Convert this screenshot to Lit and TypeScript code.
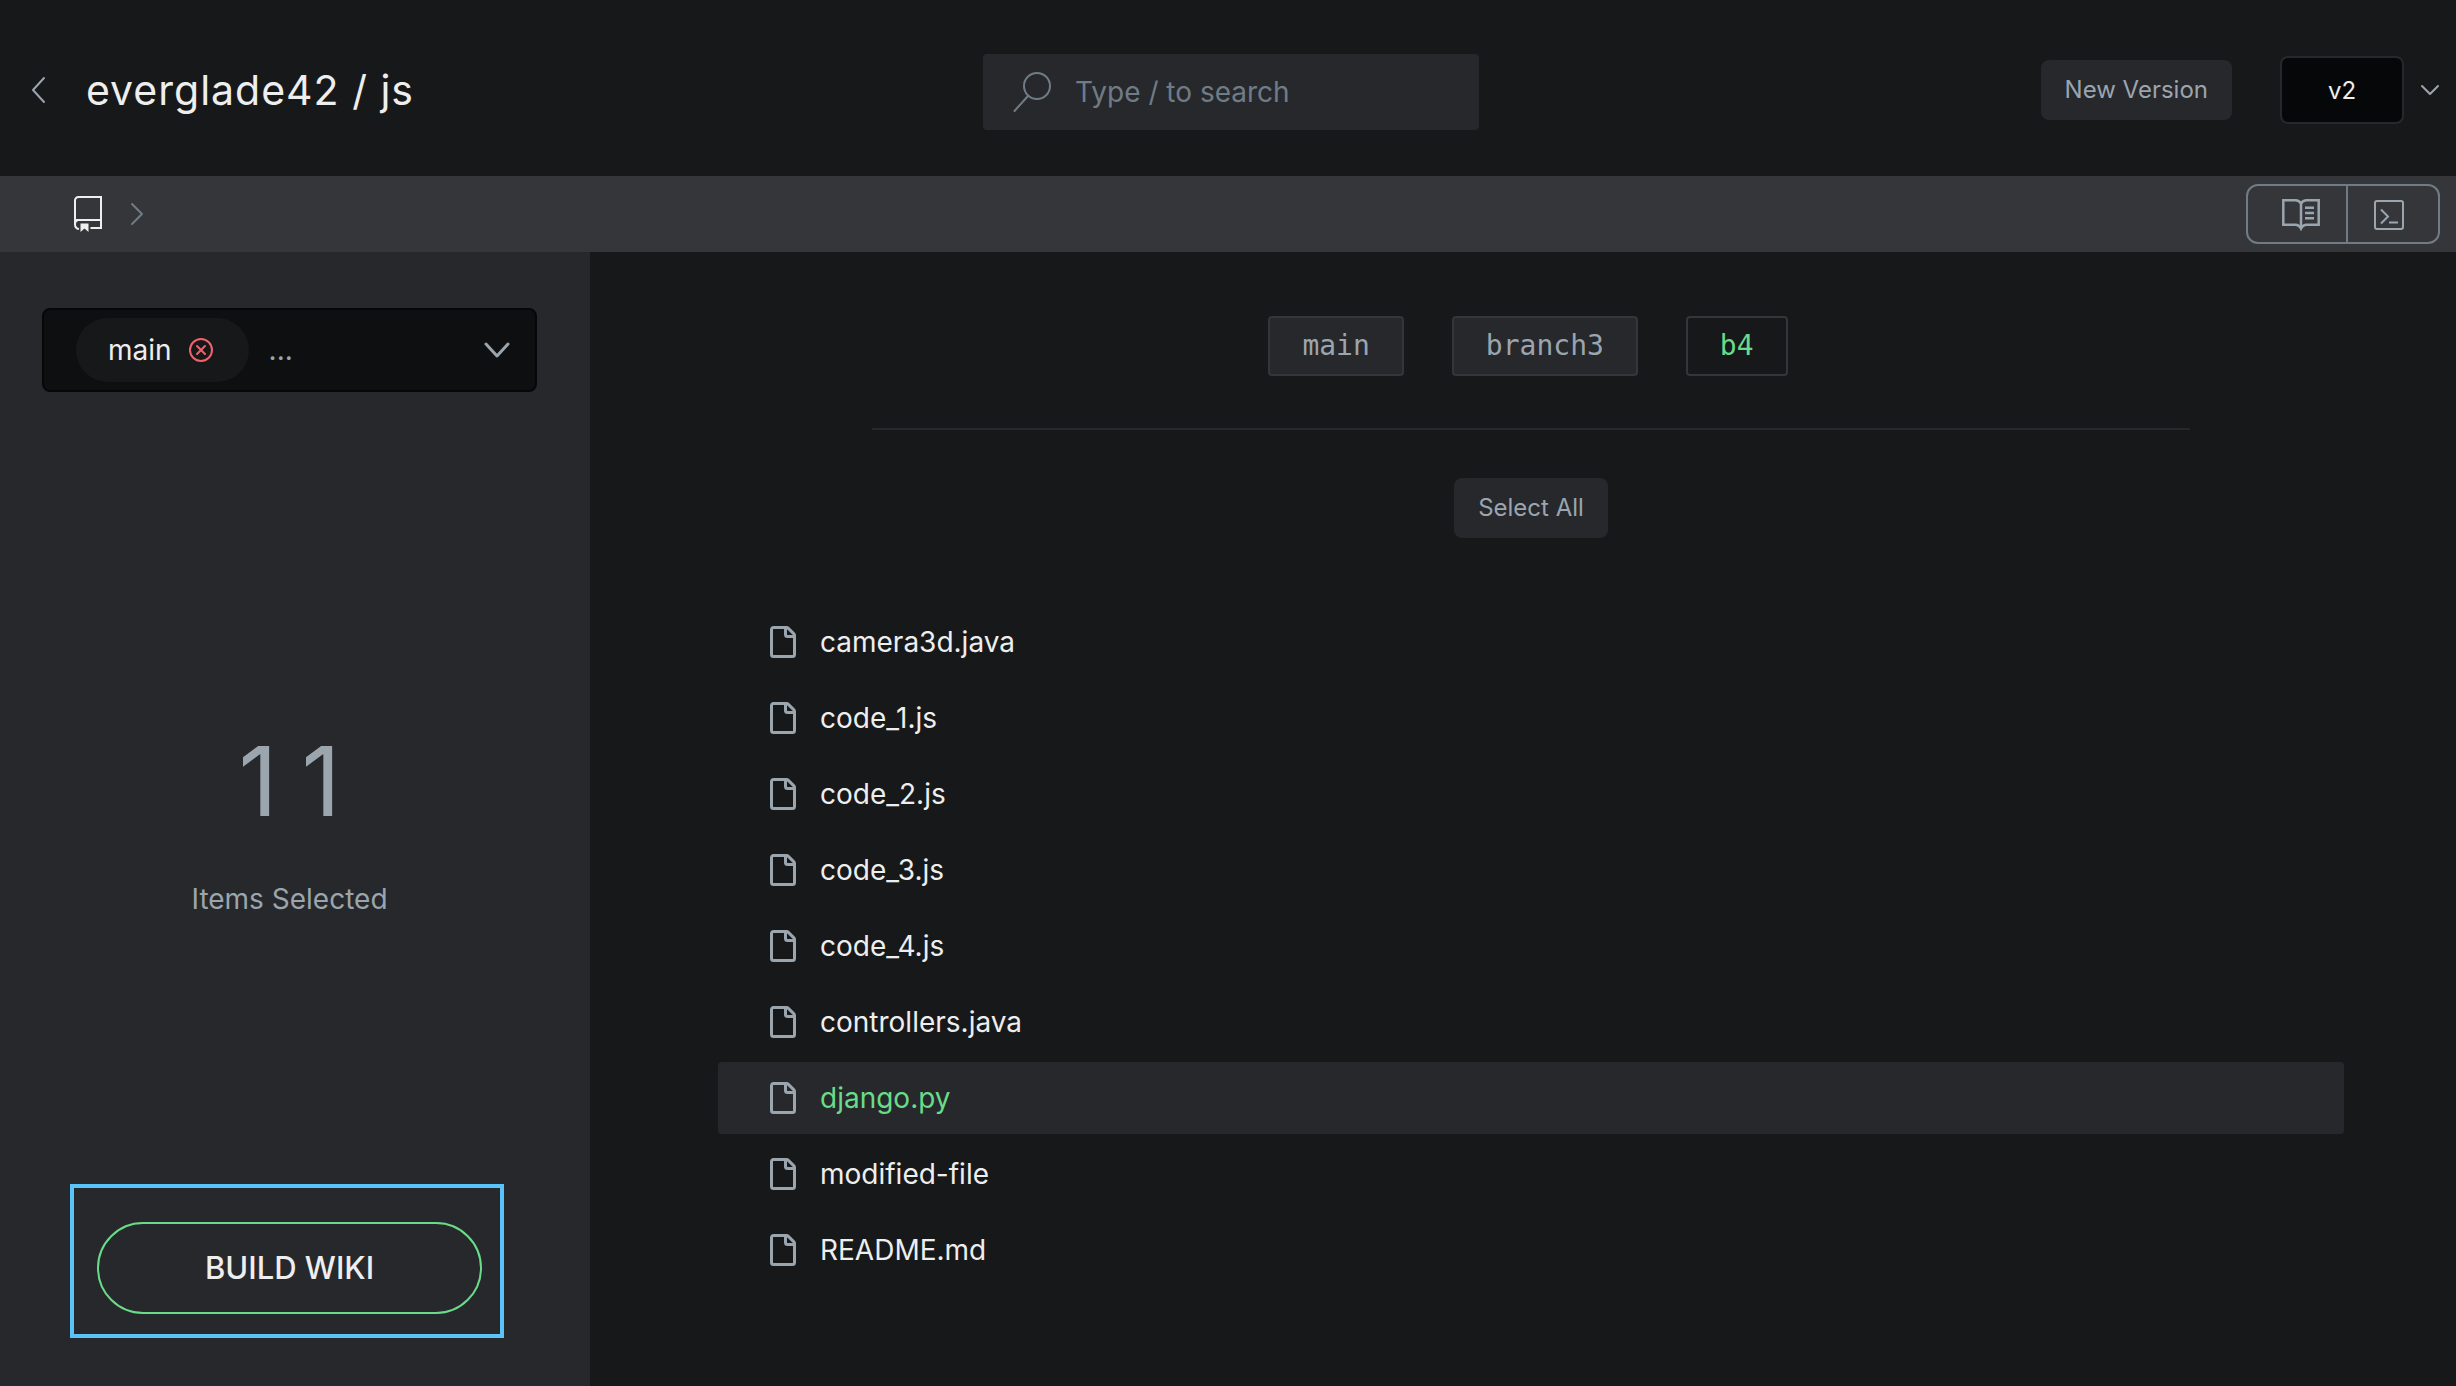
import { LitElement, html, css, svg } from "lit";
import { customElement, state } from "lit/decorators.js";
import { classMap } from "lit/directives/class-map.js";

const FILES = [
  "camera3d.java",
  "code_1.js",
  "code_2.js",
  "code_3.js",
  "code_4.js",
  "controllers.java",
  "django.py",
  "modified-file",
  "README.md",
];

const BRANCHES = ["main", "branch3", "b4"];

const chevron = (w: number, h: number, points: string, width: number) => html`
  <svg width=${w} height=${h} viewBox="0 0 ${w} ${h}" fill="none" stroke="currentColor"
    stroke-width=${width} stroke-linecap="round" stroke-linejoin="round" aria-hidden="true">
    ${svg`<polyline points=${points} />`}
  </svg>`;

const fileIcon = html`
  <svg class="file-icon" width="32" height="32" viewBox="0 0 16 16" fill="currentColor" aria-hidden="true">
    <path d="M2 1.75C2 .784 2.784 0 3.75 0h6.586c.464 0 .909.184 1.237.513l2.914 2.914c.329.328.513.773.513 1.237v9.586A1.75 1.75 0 0 1 13.25 16h-9.5A1.75 1.75 0 0 1 2 14.25Zm1.75-.25a.25.25 0 0 0-.25.25v12.5c0 .138.112.25.25.25h9.5a.25.25 0 0 0 .25-.25V6h-2.75A1.75 1.75 0 0 1 9 4.25V1.5Zm6.75.062V4.25c0 .138.112.25.25.25h2.688l-.011-.013-2.914-2.914-.013-.011Z"/>
  </svg>`;

const repoIcon = html`
  <svg width="28" height="36" viewBox="0 0 28 36" fill="none" stroke="currentColor" stroke-width="2" aria-hidden="true">
    <path d="M27 1H4.5A3.5 3.5 0 0 0 1 4.5V28a5 5 0 0 0 4 5M27 0V32H16.500M2 24H27M1 28a4 4 0 0 1 3-4"/>
    <path d="M6.500 27.500h8V36l-4-3.500-4 3.500z" fill="currentColor" stroke="none"/>
  </svg>`;

const bookIcon = html`
  <svg width="38" height="32" viewBox="0 0 38 32" fill="none" stroke="currentColor" stroke-width="2.500" aria-hidden="true">
    <path d="M1.300 1.300H14Q18 1.800 19 5Q20 1.800 24 1.300H36.700V25.700H24Q20.500 26.200 19 29.500Q17.500 26.200 14 25.700H1.300ZM19 5V29"/>
    <path d="M23 8.700h9M23 14h9M23 19.300h9"/>
  </svg>`;

const terminalIcon = html`
  <svg width="30" height="30" viewBox="0 0 30 30" fill="none" stroke="currentColor" stroke-width="2" aria-hidden="true">
    <rect x="1" y="1" width="28" height="28" rx="2"/>
    <path d="M7 9.500l7 7-7 7M15 22.500h9"/>
  </svg>`;

@customElement("app-root")
export class AppRoot extends LitElement {
  @state() private branch = "b4";
  @state() private file = "django.py";

  static styles = css`
    :host {
      display: flex;
      flex-direction: column;
      min-height: 100vh;
      background: #17181a;
      color: #eeeeee;
      font-family: Inter, "Liberation Sans", sans-serif;
      font-size: 28px;
      line-height: 40px;
    }
    *, *::before, *::after { box-sizing: border-box; }
    svg { display: block; flex: none; }
    button, input, select, a {
      font: inherit;
      color: inherit;
      letter-spacing: inherit;
    }
    button {
      display: flex;
      align-items: center;
      justify-content: center;
      padding: 0;
      border: 0;
      background: none;
      cursor: pointer;
    }
    .header {
      display: grid;
      grid-template-columns: 1fr 496px 1fr;
      align-items: center;
      height: 176px;
      padding: 0 16px 0 22px;
    }
    .title-group {
      display: flex;
      align-items: center;
      gap: 40px;
      padding: 4px 0 0 9px;
      color: #9aa5ae;
    }
    .title {
      margin: 0;
      font-size: 41px;
      font-weight: 400;
      line-height: 48px;
      letter-spacing: 1px;
      color: #eeeeee;
    }
    .search {
      display: flex;
      align-items: center;
      gap: 24px;
      height: 76px;
      margin-top: 8px;
      padding: 0 30px;
      border-radius: 4px;
      background: #27282c;
      color: #707c85;
    }
    .search-input {
      flex: 1;
      min-width: 0;
      padding: 0;
      border: 0;
      outline: 0;
      background: none;
    }
    .search-input::placeholder, .branch-input::placeholder { color: inherit; opacity: 1; }
    .versions {
      display: flex;
      align-items: center;
      justify-content: flex-end;
      gap: 48px;
      padding-top: 4px;
    }
    .small-button {
      height: 60px;
      padding: 0 24px;
      border-radius: 8px;
      background: #27282c;
      color: #9aa5ae;
      font-size: 24px;
    }
    .version-picker {
      display: flex;
      align-items: center;
      gap: 16px;
      color: #9aa5ae;
    }
    .version-select {
      appearance: none;
      width: 124px;
      height: 68px;
      padding: 2px 0 0;
      border: 2px solid #27282c;
      border-radius: 8px;
      background: #060709;
      color: #eeeeee;
      font-size: 24px;
      text-align: center;
      text-align-last: center;
    }
    .bar {
      display: flex;
      align-items: center;
      justify-content: space-between;
      height: 76px;
      padding: 0 16px 0 74px;
      background: #35363a;
    }
    .crumbs {
      display: flex;
      align-items: center;
      gap: 28px;
      color: #707c85;
    }
    .repo-link { color: #eeeeee; }
    .modes {
      display: flex;
      height: 60px;
      border: 2px solid #707c85;
      border-radius: 12px;
      color: #9aa5ae;
    }
    .mode { width: 90px; padding: 2px 8px 0 0; }
    .mode-wiki {
      width: 100px;
      padding: 2px 0 0 8px;
      border-right: 2px solid #707c85;
    }
    .body { display: flex; flex: 1; }
    .sidebar {
      display: flex;
      flex-direction: column;
      justify-content: space-between;
      width: 590px;
      padding: 56px 53px 72px 42px;
      background: #27282c;
    }
    .branch-box {
      display: flex;
      align-items: center;
      gap: 20px;
      height: 84px;
      padding: 0 25px 0 32px;
      border: 2px solid #060708;
      border-radius: 8px;
      background: #0e0f11;
      color: #9aa5ae;
    }
    .chip {
      display: flex;
      align-items: center;
      gap: 17px;
      height: 64px;
      padding: 0 36px 0 32px;
      border-radius: 32px;
      background: #17181a;
      color: #eeeeee;
    }
    .remove { color: #ef626c; }
    .branch-input {
      flex: 1;
      min-width: 0;
      padding: 0;
      border: 0;
      outline: 0;
      background: none;
    }
    .counter {
      display: flex;
      flex-direction: column;
      align-items: center;
      gap: 50px;
      padding-top: 38px;
      color: #9aa5ae;
    }
    .count {
      padding-left: 24px;
      font-size: 96px;
      line-height: 96px;
      letter-spacing: 24px;
    }
    .build { position: relative; margin: 0 55px; }
    .build-button {
      width: 100%;
      height: 92px;
      border: 2px solid #68dc88;
      border-radius: 46px;
      font-size: 31px;
      font-weight: 500;
    }
    .highlight {
      position: absolute;
      inset: -38px -22px -24px -27px;
      border: 4px solid #59c3fa;
      pointer-events: none;
    }
    .main {
      display: flex;
      flex: 1;
      flex-direction: column;
      align-items: center;
      padding: 64px 112px 64px 128px;
    }
    .branches {
      display: flex;
      gap: 48px;
      padding-right: 6px;
    }
    .branch {
      height: 60px;
      padding: 0 32px;
      border: 2px solid #35363a;
      border-radius: 4px;
      background: #27282c;
      color: #9aa5ae;
      font-family: "DejaVu Sans Mono", monospace;
    }
    .branch.active { background: none; color: #68dc88; }
    .divider {
      width: 81%;
      height: 2px;
      margin: 52px 0 48px;
      border: 0;
      background: #27282c;
    }
    .files {
      display: flex;
      flex-direction: column;
      gap: 4px;
      width: 100%;
      margin: 68px 0 0;
      padding: 0;
      list-style: none;
    }
    .file {
      display: flex;
      align-items: center;
      gap: 22px;
      height: 72px;
      padding: 0 48px;
      border-radius: 4px;
      text-decoration: none;
    }
    .file-icon { color: #9aa5ae; }
    .file.active { background: #27282c; }
    .file.active .file-name { color: #68dc88; }
  `;

  render() {
    return html`
      <header class="header">
        <div class="title-group">
          <button aria-label="Back">${chevron(15, 28, "13,2 2,14 13,26", 2)}</button>
          <h1 class="title">everglade42 / js</h1>
        </div>
        <label class="search">
          <svg width="38" height="40" viewBox="0 0 38 40" fill="none" stroke="currentColor"
            stroke-width="2" stroke-linecap="round" aria-hidden="true">
            <circle cx="24" cy="14" r="13"/><path d="M15 24L1.500 39"/>
          </svg>
          <input class="search-input" type="text" aria-label="Search" placeholder="Type / to search">
        </label>
        <div class="versions">
          <button class="small-button">New Version</button>
          <label class="version-picker">
            <select class="version-select" aria-label="Version"><option>v2</option></select>
            ${chevron(20, 12, "2,2 10,10 18,2", 2)}
          </label>
        </div>
      </header>
      <nav class="bar" aria-label="Repository">
        <div class="crumbs">
          <a class="repo-link" href="#" aria-label="Repository root">${repoIcon}</a>
          ${chevron(14, 24, "2,2 12,12 2,22", 2)}
        </div>
        <div class="modes">
          <button class="mode mode-wiki" aria-label="Wiki">${bookIcon}</button>
          <button class="mode" aria-label="Code">${terminalIcon}</button>
        </div>
      </nav>
      <div class="body">
        <aside class="sidebar">
          <div class="branch-box">
            <div class="chip">
              main
              <button class="remove" aria-label="Remove main">
                <svg width="24" height="24" viewBox="0 0 24 24" fill="none" stroke="currentColor"
                  stroke-width="2" stroke-linecap="round" aria-hidden="true">
                  <circle cx="12" cy="12" r="11"/><path d="M8 8l8 8M16 8l-8 8"/>
                </svg>
              </button>
            </div>
            <input class="branch-input" type="text" aria-label="Branches" placeholder="...">
            <button aria-label="Show branches">${chevron(26, 16, "2,2 13,14 24,2", 3)}</button>
          </div>
          <div class="counter">
            <div class="count">11</div>
            <div>Items Selected</div>
          </div>
          <div class="build">
            <button class="build-button">BUILD WIKI</button>
            <div class="highlight"></div>
          </div>
        </aside>
        <main class="main">
          <div class="branches">
            ${BRANCHES.map((name) => html`
              <button class=${classMap({ branch: true, active: name === this.branch })}
                @click=${() => { this.branch = name; }}>${name}</button>`)}
          </div>
          <hr class="divider">
          <button class="small-button">Select All</button>
          <ul class="files">
            ${FILES.map((name) => html`
              <li><a class=${classMap({ file: true, active: name === this.file })} href="#"
                @click=${(e: Event) => { e.preventDefault(); this.file = name; }}>
                ${fileIcon}<span class="file-name">${name}</span></a></li>`)}
          </ul>
        </main>
      </div>
    `;
  }
}
